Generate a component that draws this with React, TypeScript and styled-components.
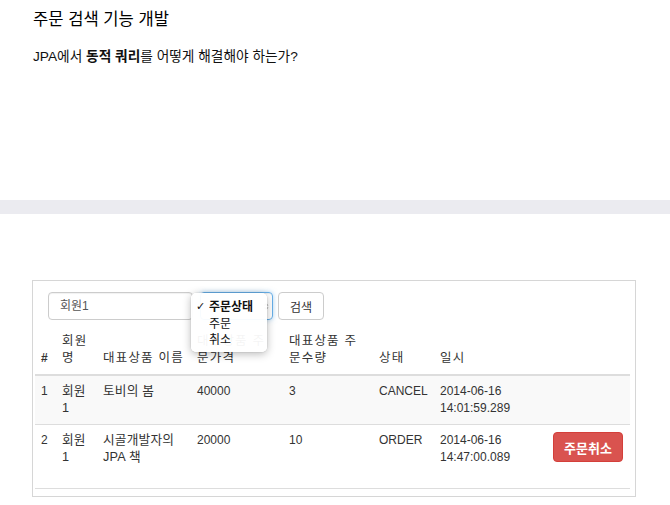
import React from "react";
import styled, { createGlobalStyle } from "styled-components";

const GlobalStyle = createGlobalStyle`
  html, body { margin: 0; padding: 0; background: #fff; }
  body {
    font-family: "Liberation Sans", "Noto Sans CJK KR", sans-serif;
    color: #333;
    font-size: 12px;
    line-height: 17px;
  }
`;

const Page = styled.div`
  width: 670px;
`;

const Intro = styled.section`
  height: 200px;
  box-sizing: border-box;
  padding: 8px 33px 0;
`;

const Title = styled.h1`
  margin: 0;
  font-size: 16.6px;
  line-height: 23px;
  font-weight: 400;
  color: #000;
`;

const Lead = styled.p`
  margin: 17px 0 0;
  font-size: 13.7px;
  line-height: 18px;
  color: #111;
  b { font-weight: 700; }
`;

const Divider = styled.div`
  height: 14px;
  background: #ebebf0;
`;

const Main = styled.main`
  padding: 66px 0 0 32px;
`;

const Panel = styled.div`
  width: 604px;
  box-sizing: border-box;
  border: 1px solid #d6d6d6;
  padding: 11px 0 7px;
`;

const SearchForm = styled.form`
  display: flex;
  align-items: center;
  padding-left: 15px;
  margin: 0 0 6px;
  height: 28px;
  position: relative;
`;

const TextInput = styled.div`
  width: 145px;
  height: 28px;
  box-sizing: border-box;
  border: 1px solid #ccc;
  border-radius: 4px;
  padding: 0 11px;
  display: flex;
  align-items: center;
  font-size: 12px;
  color: #555;
  box-shadow: inset 0 1px 1px rgba(0, 0, 0, 0.06);
`;

const SelectBox = styled.div`
  margin-left: 7px;
  width: 73px;
  height: 28px;
  box-sizing: border-box;
  border: 1px solid #66afe9;
  border-radius: 4px;
  box-shadow: inset 0 1px 1px rgba(0,0,0,.075), 0 0 5px rgba(102, 175, 233, 0.5);
  display: flex;
  align-items: center;
  justify-content: flex-end;
  padding-right: 3px;
`;

const Button = styled.button`
  margin-left: 5px;
  height: 28px;
  width: 46px;
  padding: 0;
  border: 1px solid #ccc;
  border-radius: 4px;
  background: #fff;
  font-family: inherit;
  font-size: 12px;
  color: #333;
`;

const Menu = styled.ul`
  position: absolute;
  left: 158px;
  top: 1px;
  width: 76px;
  margin: 0;
  padding: 6px 0 3px;
  list-style: none;
  background: rgba(255, 255, 255, 0.95);
  border-radius: 5px;
  box-shadow: 0 2px 9px rgba(0, 0, 0, 0.28), 0 0 0 0.5px rgba(0,0,0,0.08);
  z-index: 2;
`;

const MenuItem = styled.li<{ $selected?: boolean }>`
  position: relative;
  padding-left: 18px;
  height: 16.5px;
  line-height: 16px;
  font-size: 12px;
  font-weight: ${(p) => (p.$selected ? 700 : 400)};
  color: #111;
`;

const Check = styled.span`
  position: absolute;
  left: 5px;
  top: 0;
  font-family: "DejaVu Sans", sans-serif;
  font-size: 11px;
  font-weight: 700;
`;

const Table = styled.table`
  margin-left: 2px;
  width: 595px;
  border-collapse: collapse;
  table-layout: fixed;
`;

const Th = styled.th<{ $wrapAt?: number }>`
  text-align: left;
  vertical-align: bottom;
  font-weight: 400;
  font-size: 12.5px;
  letter-spacing: 1.2px;
  padding: 7px ${(p) => p.$wrapAt ?? 6}px 7px 6px;
  border-bottom: 2px solid #ddd;
  color: #333;
`;

const Hash = styled.span`
  font-weight: 700;
  font-size: 12px;
  letter-spacing: 0;
`;

const Row = styled.tr<{ $striped?: boolean }>`
  background: ${(p) => (p.$striped ? "#f9f9f9" : "#fff")};
  & > td { border-top: 1px solid #ddd; }
  &:last-child > td { border-bottom: 1px solid #ddd; }
`;

const Td = styled.td`
  vertical-align: top;
  padding: 7px 6px;
  color: #333;
`;

const Ko = styled.span`
  font-size: 12.7px;
  letter-spacing: 0.2px;
`;

const CancelForm = styled.div`
  margin-bottom: 19px;
`;

const DangerButton = styled.button`
  height: 30px;
  width: 70px;
  border: 1px solid #d43f3a;
  border-radius: 4px;
  background: #d9534f;
  color: #fff;
  font-family: inherit;
  font-size: 13px;
  font-weight: 600;
  padding: 0;
`;

const Arrows = () => (
  <svg width="6" height="9" viewBox="0 0 6 9">
    <path d="M0.5 3.5 L3 1 L5.5 3.5 Z" fill="#9a9a9a" />
    <path d="M0.5 5.5 L3 8 L5.5 5.5 Z" fill="#9a9a9a" />
  </svg>
);

const cols = [21, 41, 94, 92, 90, 61, 113, 83];

const orders = [
  { id: 1, member: "회원1", item: "토비의 봄", price: 40000, count: 3, status: "CANCEL", date: "2014-06-16", time: "14:01:59.289" },
  { id: 2, member: "회원1", item: "시골개발자의 JPA 책", price: 20000, count: 10, status: "ORDER", date: "2014-06-16", time: "14:47:00.089" },
];

export default function App() {
  return (
    <Page>
      <GlobalStyle />
      <Intro>
        <Title>주문 검색 기능 개발</Title>
        <Lead>
          JPA에서 <b>동적 쿼리</b>를 어떻게 해결해야 하는가?
        </Lead>
      </Intro>
      <Divider />
      <Main>
        <Panel>
          <SearchForm onSubmit={(e) => e.preventDefault()}>
            <TextInput>회원1</TextInput>
            <SelectBox>
              <Arrows />
            </SelectBox>
            <Button type="button">검색</Button>
            <Menu>
              <MenuItem $selected>
                <Check>✓</Check>주문상태
              </MenuItem>
              <MenuItem>주문</MenuItem>
              <MenuItem>취소</MenuItem>
            </Menu>
          </SearchForm>
          <Table>
            <colgroup>
              {cols.map((w, i) => (
                <col key={i} style={{ width: w }} />
              ))}
            </colgroup>
            <thead>
              <tr>
                <Th><Hash>#</Hash></Th>
                <Th>회원명</Th>
                <Th>대표상품 이름</Th>
                <Th $wrapAt={12}>대표상품 주문가격</Th>
                <Th $wrapAt={12}>대표상품 주문수량</Th>
                <Th>상태</Th>
                <Th>일시</Th>
                <Th></Th>
              </tr>
            </thead>
            <tbody>
              {orders.map((o, i) => (
                <Row key={o.id} $striped={i % 2 === 0}>
                  <Td>{o.id}</Td>
                  <Td><Ko>{o.member}</Ko></Td>
                  <Td><Ko>{o.item}</Ko></Td>
                  <Td>{o.price}</Td>
                  <Td>{o.count}</Td>
                  <Td>{o.status}</Td>
                  <Td>
                    {o.date}
                    <br />
                    {o.time}
                  </Td>
                  <Td>
                    {o.status === "ORDER" && (
                      <CancelForm>
                        <DangerButton type="button">주문취소</DangerButton>
                      </CancelForm>
                    )}
                  </Td>
                </Row>
              ))}
            </tbody>
          </Table>
        </Panel>
      </Main>
    </Page>
  );
}
